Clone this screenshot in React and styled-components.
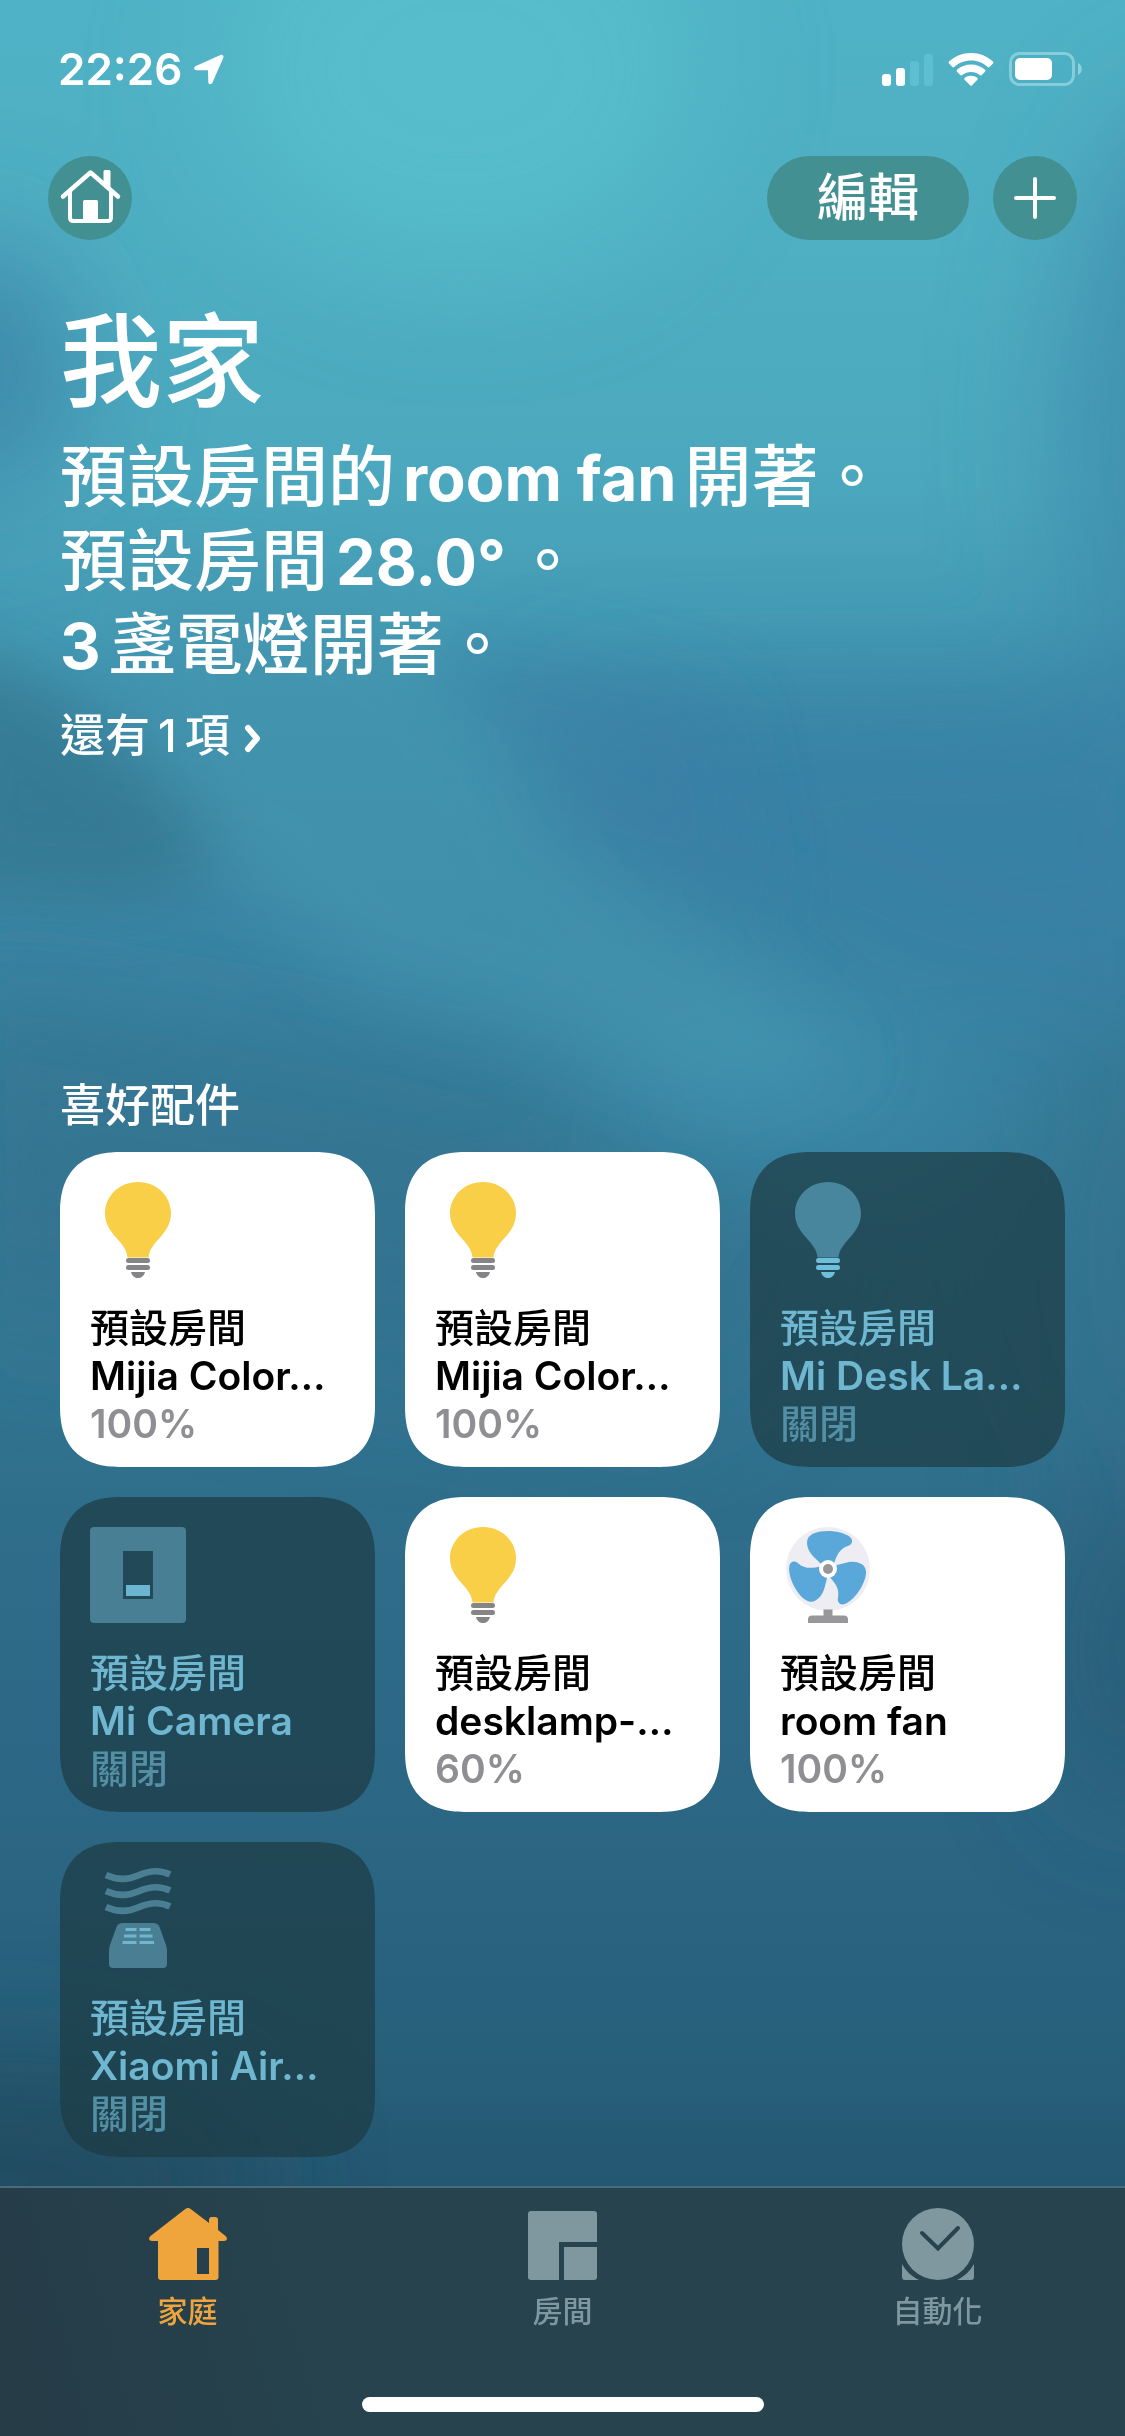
import React from "react";
import styled, { createGlobalStyle } from "styled-components";

const GlobalStyle = createGlobalStyle`
  *, *::before, *::after { box-sizing: border-box; }
  html { background: #27607c; }
  body {
    margin: 0;
    font-family: Inter, "Noto Sans CJK TC", sans-serif;
    color: #fff;
  }
  button {
    margin: 0;
    padding: 0;
    border: 0;
    background: none;
    font: inherit;
    color: inherit;
    text-align: left;
    cursor: pointer;
  }
  svg { display: block; flex: none; overflow: visible; }
`;

/* ---------- layout ---------- */

const Page = styled.div`
  position: relative;
  isolation: isolate;
  display: flex;
  flex-direction: column;
  min-height: 100vh;
  overflow: hidden;
`;

const WallpaperArt = styled.svg`
  position: absolute;
  inset: 0;
  z-index: -1;
  width: 100%;
  height: 100%;
`;

const StatusBar = styled.div`
  display: flex;
  align-items: center;
  justify-content: space-between;
  height: 138px;
  padding: 0 43px 0 58px;
`;

const StatusGroup = styled.div`
  display: flex;
  align-items: center;
  gap: ${(p) => p.$gap}px;
`;

const Clock = styled.time`
  font-size: 44px;
  line-height: 54px;
  font-weight: 600;
`;

const NavBar = styled.header`
  display: flex;
  justify-content: space-between;
  padding: 18px 48px 0;
`;

const NavActions = styled.div`
  display: flex;
  gap: 24px;
`;

const PillButton = styled.button`
  display: flex;
  align-items: center;
  justify-content: center;
  min-width: 84px;
  height: 84px;
  padding: 0 ${(p) => (p.$text ? 50 : 0)}px;
  border-radius: 42px;
  background: #429091;
  font-size: 51px;
  line-height: 60px;
  font-weight: 500;
`;

const Main = styled.main`
  display: flex;
  flex: 1;
  flex-direction: column;
  padding: 62px 60px 29px;
`;

const Title = styled.h1`
  margin: 0;
  font-size: 102px;
  line-height: 120px;
  font-weight: 500;
`;

const Summary = styled.div`
  margin-top: 13px;
  font-size: 67px;
  line-height: 84px;
  font-weight: 500;
`;

const SummaryLine = styled.p`
  margin: 0;
`;

const Latin = styled.span`
  margin: 0 8px 0 ${(p) => (p.$lead ? 0 : 8)}px;
  font-size: 63px;
  line-height: 1;
  font-weight: 700;
`;

const MoreButton = styled.button`
  display: flex;
  align-items: center;
  align-self: flex-start;
  gap: 14px;
  margin-top: 22px;
  font-size: 45px;
  line-height: 54px;
  font-weight: 500;
`;

const Count = styled.span`
  margin: 0 8px;
`;

const Favorites = styled.section`
  margin-top: 316px;
`;

const SectionTitle = styled.h2`
  margin: 0 0 19px;
  font-size: 45px;
  line-height: 54px;
  font-weight: 500;
`;

const CardGrid = styled.ul`
  display: grid;
  grid-template-columns: repeat(3, minmax(0, 1fr));
  gap: 30px;
  margin: 0;
  padding: 0;
  list-style: none;
`;

const Card = styled.button`
  display: flex;
  flex-direction: column;
  width: 100%;
  padding: 30px 30px 19px;
  border-radius: 50px;
  background: ${(p) => (p.$on ? "#fff" : "rgba(29, 59, 68, 0.72)")};
  color: ${(p) => (p.$on ? "#000" : "#6fb6d0")};

  @supports (corner-shape: superellipse(1.3)) {
    border-radius: 62px;
    corner-shape: superellipse(1.3);
  }
`;

const CardText = styled.span`
  display: flex;
  flex-direction: column;
  margin-top: 26px;
  font-size: 39px;
  line-height: 48px;
  font-weight: 500;
  white-space: nowrap;
`;

const DeviceName = styled.span`
  font-weight: 600;
`;

const DeviceState = styled.span`
  font-weight: ${(p) => (p.$on ? 600 : 500)};
  color: ${(p) => (p.$on ? "#8e8e93" : "#5390a5")};
`;

const TabBar = styled.footer`
  display: flex;
  flex-direction: column;
  align-items: center;
  justify-content: space-between;
  height: 250px;
  padding-bottom: 24px;
  border-top: 2px solid #476b7c;
  background: linear-gradient(75deg, #263c47 0%, #26434e 30%, #26434e 100%);
`;

const Tabs = styled.nav`
  display: grid;
  grid-template-columns: repeat(3, 1fr);
  width: 100%;
`;

const Tab = styled.a`
  display: flex;
  flex-direction: column;
  align-items: center;
  padding-top: 20px;
  font-size: 30px;
  line-height: 36px;
  font-weight: 500;
  color: ${(p) => (p.$active ? "#f0a53c" : "#7f979f")};
  text-decoration: none;
`;

const TabIcon = styled.span`
  display: flex;
  align-items: flex-end;
  height: 72px;
  margin-bottom: 13px;
`;

const HomeIndicator = styled.div`
  width: 402px;
  height: 15px;
  border-radius: 8px;
  background: #fff;
`;

/* ---------- drawings ---------- */

function Wallpaper() {
  return (
    <WallpaperArt viewBox="0 0 1125 2436" preserveAspectRatio="none" aria-hidden="true">
      <defs>
        <linearGradient id="water" x1="0" y1="0" x2="0" y2="1">
          <stop offset="0" stopColor="#50b2c6" />
          <stop offset="0.1" stopColor="#4fafc3" />
          <stop offset="0.2" stopColor="#4ba7bd" />
          <stop offset="0.25" stopColor="#459cb5" />
          <stop offset="0.29" stopColor="#3f90ad" />
          <stop offset="0.35" stopColor="#3c88a7" />
          <stop offset="0.45" stopColor="#3781a0" />
          <stop offset="0.55" stopColor="#337895" />
          <stop offset="0.62" stopColor="#2f6e8b" />
          <stop offset="0.75" stopColor="#2b6683" />
          <stop offset="0.85" stopColor="#275f7a" />
          <stop offset="0.9" stopColor="#245670" />
        </linearGradient>
        <filter id="soft" x="-100%" y="-100%" width="300%" height="300%">
          <feGaussianBlur stdDeviation="60" />
        </filter>
        <filter id="fine" x="-50%" y="-50%" width="200%" height="200%">
          <feGaussianBlur stdDeviation="34" />
        </filter>
      </defs>
      <rect width="1125" height="2436" fill="url(#water)" />
      <g filter="url(#soft)">
        <ellipse cx="460" cy="70" rx="240" ry="200" fill="#59c1ce" opacity="0.7" />
        <ellipse cx="-30" cy="370" rx="110" ry="130" fill="#3a7fa3" opacity="0.75" />
        <ellipse cx="1210" cy="430" rx="150" ry="340" fill="#3c86a8" opacity="0.7" />
        <path d="M560 700L1200 690L1200 1010L960 1000C850 920 650 900 590 840Z" fill="#377da3" opacity="0.75" />
        <path d="M-60 980L300 1040L620 1110L840 1250L700 1420L-60 1300Z" fill="#2f6c88" opacity="0.5" />
        <ellipse cx="1140" cy="1250" rx="120" ry="240" fill="#2f6c86" opacity="0.5" />
        <ellipse cx="760" cy="1080" rx="190" ry="80" fill="#4090ae" opacity="0.7" />
        <ellipse cx="0" cy="2180" rx="260" ry="120" fill="#214b5e" opacity="0.8" />
        <ellipse cx="1140" cy="1650" rx="90" ry="160" fill="#265a74" opacity="0.7" />
      </g>
      <g filter="url(#fine)">
        <path d="M170 560L400 620L490 740L560 850L740 960L860 1060L740 1110L560 1040L360 980L240 880L120 700Z" fill="#4596af" opacity="0.6" />
        <path d="M430 650C520 640 640 680 720 700L760 900C700 900 620 880 570 830C510 770 500 730 430 650Z" fill="#387fa5" opacity="0.55" />
        <path d="M-60 640L40 690L150 770L225 850L150 900L-60 890Z" fill="#33758f" opacity="0.8" />
      </g>
    </WallpaperArt>
  );
}

const LocationArrow = () => (
  <svg width="30" height="30" viewBox="0 0 30 30" fill="#fff" aria-hidden="true">
    <path d="M26.5 1L1.8 12C-.6 13.200-.2 16.200 2.300 16.200L14 16.300L14.300 28C14.300 30.600 17.300 31 18.400 28.800L29.300 3.800C30.100 1.800 28.500 .2 26.500 1Z" />
  </svg>
);

const Signal = () => (
  <svg width="51" height="33" viewBox="0 0 51 33" fill="#fff" aria-hidden="true">
    <rect x="0" y="21" width="9" height="12" rx="3" />
    <rect x="14" y="15" width="9" height="18" rx="3" />
    <g fill="#62c4d4" opacity="0.75">
      <rect x="28" y="8" width="9" height="25" rx="3" />
      <rect x="42" y="1" width="9" height="32" rx="3" />
    </g>
  </svg>
);

const Wifi = () => (
  <svg width="46" height="33" viewBox="0 0 46 33" fill="#fff" aria-hidden="true">
    <path d="M23 0C31.500 0 39.300 3.200 45 8.600Q46 9.600 45 10.600L41.600 14Q40.700 14.800 39.700 13.900C35.200 9.800 29.400 7.500 23 7.500S10.800 9.800 6.300 13.900Q5.300 14.800 4.400 14L1 10.600Q0 9.600 1 8.600C6.700 3.200 14.500 0 23 0Z" />
    <path d="M23 11.400C28.400 11.400 33.300 13.400 37 16.800Q38 17.700 37 18.700L33.500 22.200Q32.700 23 31.700 22.100C29.300 20.100 26.300 18.900 23 18.900S16.700 20.100 14.300 22.100Q13.300 23 12.500 22.200L9 18.700Q8 17.700 9 16.800C12.700 13.400 17.600 11.400 23 11.400Z" />
    <path d="M23 22.700C25.500 22.700 27.700 23.600 29.400 25Q30.200 25.900 29.400 26.700L24 32.300Q23 33.300 22 32.300L16.600 26.700Q15.800 25.900 16.600 25C18.300 23.600 20.500 22.700 23 22.700Z" />
  </svg>
);

const Battery = () => (
  <svg width="73" height="34" viewBox="0 0 73 34" aria-hidden="true">
    <rect x="1.500" y="1.500" width="63" height="31" rx="9" fill="none" stroke="#a5dbe6" strokeWidth="3" opacity="0.65" />
    <path d="M69 11C74 13 74 21 69 23Z" fill="#a5dbe6" opacity="0.75" />
    <rect x="6" y="6" width="37" height="22" rx="5" fill="#fff" />
  </svg>
);

const HouseOutline = () => (
  <svg width="84" height="84" viewBox="0 0 84 84" fill="none" stroke="#fff" strokeLinecap="round" strokeLinejoin="round" aria-hidden="true">
    <path d="M15 40.500L42.500 16.500L70 40.500" strokeWidth="4.500" />
    <path d="M22 36V61.500Q22 65 25.500 65H59.500Q63 65 63 61.500V36" strokeWidth="4" />
    <path d="M55.500 26V15.500Q55.500 14 57 14H61Q62.500 14 62.500 15.500V33Z" fill="#fff" stroke="none" />
    <path d="M35 66V45.500Q35 44 36.500 44H48.500Q50 44 50 45.500V66Z" fill="#fff" stroke="none" />
  </svg>
);

const Plus = () => (
  <svg width="42" height="42" viewBox="0 0 42 42" fill="none" stroke="#fff" strokeWidth="4" strokeLinecap="round" aria-hidden="true">
    <path d="M21 2V40M2 21H40" />
  </svg>
);

const Chevron = () => (
  <svg width="17" height="32" viewBox="0 0 17 32" fill="none" stroke="#fff" strokeWidth="6" strokeLinecap="round" strokeLinejoin="round" aria-hidden="true">
    <path d="M4 8L13 18.500L4 29" />
  </svg>
);

const Bulb = ({ on }) => (
  <svg width="96" height="96" viewBox="0 0 96 96" fill={on ? "#858588" : "#6fbfdc"} aria-hidden="true">
    <path
      d="M48 0C67 0 81 14.500 81 31C81 42 76 48.500 70 55.500C64 62 59 68 58.500 75.500H37.500C37 68 32 62 26 55.500C20 48.500 15 42 15 31C15 14.500 29 0 48 0Z"
      fill={on ? "#f8cf47" : "#47869c"}
    />
    <rect x="36" y="76" width="24" height="5" rx="2.500" />
    <rect x="36" y="83" width="24" height="5" rx="2.500" />
    <path d="M41 90H55C54 94 51 96 48 96S42 94 41 90Z" />
  </svg>
);

const CameraSwitch = () => (
  <svg width="96" height="96" viewBox="0 0 96 96" aria-hidden="true">
    <path fillRule="evenodd" d="M4 0H92Q96 0 96 4V92Q96 96 92 96H4Q0 96 0 92V4Q0 0 4 0ZM33 24V72H63V24Z" fill="#487f94" />
    <rect x="36" y="58" width="24" height="11" fill="#6bb5d0" />
  </svg>
);

const blade =
  "M40 36C34 30 27 25 27 15.500C27 7 37 4 48 4C56 4 65 6 70 10C73.500 13 72.500 17.500 68 19C60 21.500 56.500 28 54 37L48 42Z";

const Fan = () => (
  <svg width="96" height="96" viewBox="0 0 96 96" aria-hidden="true">
    <circle cx="48" cy="42" r="42" fill="#eeedf3" />
    <g fill="#5aa8da">
      <path d={blade} />
      <path d={blade} transform="rotate(120 48 42)" />
      <path d={blade} transform="rotate(240 48 42)" />
    </g>
    <circle cx="48" cy="42" r="9" fill="#fff" />
    <circle cx="48" cy="42" r="5" fill="#98989a" />
    <path d="M43.500 82.500H52.500V88.500H64Q68 88.500 68 92.500V96H28V92.500Q28 88.500 32 88.500H43.500Z" fill="#98989a" />
  </svg>
);

const Purifier = () => (
  <svg width="96" height="96" viewBox="0 0 96 96" fill="none" aria-hidden="true">
    <g stroke="#4a7f93" strokeWidth="6.500">
      <path d="M16 3C27 8 38 8 48 3.500S69 -3 80 2.500" />
      <path d="M16 19C27 24 38 24 48 19.500S69 13 80 18.500" />
      <path d="M16 35C27 40 38 40 48 35.500S69 29 80 34.500" />
    </g>
    <path d="M33 51H63Q68 51 69.500 55L76 73Q77 76 77 79V92Q77 96 73 96H23Q19 96 19 92V79Q19 76 20 73L26.500 55Q28 51 33 51Z" fill="#4a7f93" />
    <path d="M35.500 57.500H46.500M49.500 57.500H60.500M34 64H46.500M49.500 64H62.500M32.500 70.500H46.500M49.500 70.500H64" stroke="#6fb6d0" strokeWidth="3" />
  </svg>
);

const TabHome = () => (
  <svg width="78" height="72" viewBox="0 0 78 72" fill="currentColor" aria-hidden="true">
    <path
      fillRule="evenodd"
      d="M36 1.200Q39 -1 42 1.200L60 15V12Q60 9 63 9H66Q69 9 69 12V22L76.500 28Q78 29.500 78 31Q77.500 33 75 33H69.500V69Q69.500 72 66.500 72H12Q9 72 9 69V33H3Q.5 33 0 31Q0 29.500 1.500 28ZM48 40V66H60V40Z"
    />
  </svg>
);

const TabRooms = () => (
  <svg width="69" height="69" viewBox="0 0 69 69" fill="currentColor" aria-hidden="true">
    <path d="M3 0H66Q69 0 69 3V31H31V69H3Q0 69 0 66V3Q0 0 3 0Z" />
    <path d="M36 36H69V66Q69 69 66 69H36Z" />
  </svg>
);

const TabClock = () => (
  <svg width="72" height="72" viewBox="0 0 72 72" fill="currentColor" aria-hidden="true">
    <circle cx="36" cy="36" r="36" />
    <path d="M0 56C4 63 9 68 17 72H3Q0 72 0 69ZM72 56C68 63 63 68 55 72H69Q72 72 72 69Z" />
    <path d="M20 25L36 40.500L56 20" fill="none" stroke="#26434e" strokeWidth="4" strokeLinecap="round" />
  </svg>
);

/* ---------- content ---------- */

const ROOM = "預設房間";

const devices = [
  { id: "color-1", name: "Mijia Color…", state: "100%", on: true, icon: <Bulb on /> },
  { id: "color-2", name: "Mijia Color…", state: "100%", on: true, icon: <Bulb on /> },
  { id: "desk", name: "Mi Desk La…", state: "關閉", on: false, icon: <Bulb /> },
  { id: "camera", name: "Mi Camera", state: "關閉", on: false, icon: <CameraSwitch /> },
  { id: "desklamp", name: "desklamp-…", state: "60%", on: true, icon: <Bulb on /> },
  { id: "fan", name: "room fan", state: "100%", on: true, icon: <Fan /> },
  { id: "air", name: "Xiaomi Air…", state: "關閉", on: false, icon: <Purifier /> },
];

const tabs = [
  { id: "home", label: "家庭", icon: <TabHome />, active: true },
  { id: "rooms", label: "房間", icon: <TabRooms /> },
  { id: "automation", label: "自動化", icon: <TabClock /> },
];

export default function App() {
  return (
    <Page lang="zh-Hant">
      <GlobalStyle />
      <Wallpaper />
      <StatusBar>
        <StatusGroup $gap={12}>
          <Clock>22:26</Clock>
          <LocationArrow />
        </StatusGroup>
        <StatusGroup $gap={15}>
          <Signal />
          <Wifi />
          <Battery />
        </StatusGroup>
      </StatusBar>
      <NavBar>
        <PillButton type="button" aria-label="家庭">
          <HouseOutline />
        </PillButton>
        <NavActions>
          <PillButton type="button" $text>編輯</PillButton>
          <PillButton type="button" aria-label="加入">
            <Plus />
          </PillButton>
        </NavActions>
      </NavBar>
      <Main>
        <Title>我家</Title>
        <Summary>
          <SummaryLine>預設房間的<Latin>room fan</Latin>開著。</SummaryLine>
          <SummaryLine>預設房間<Latin>28.0°</Latin>。</SummaryLine>
          <SummaryLine><Latin $lead>3</Latin>盞電燈開著。</SummaryLine>
        </Summary>
        <MoreButton type="button">
          <span>還有<Count>1</Count>項</span>
          <Chevron />
        </MoreButton>
        <Favorites>
          <SectionTitle>喜好配件</SectionTitle>
          <CardGrid>
            {devices.map((d) => (
              <li key={d.id}>
                <Card type="button" $on={d.on} aria-pressed={d.on}>
                  {d.icon}
                  <CardText>
                    <span>{ROOM}</span>
                    <DeviceName>{d.name}</DeviceName>
                    <DeviceState $on={d.on}>{d.state}</DeviceState>
                  </CardText>
                </Card>
              </li>
            ))}
          </CardGrid>
        </Favorites>
      </Main>
      <TabBar>
        <Tabs>
          {tabs.map((t) => (
            <Tab key={t.id} href={`#${t.id}`} $active={t.active} aria-current={t.active ? "page" : undefined}>
              <TabIcon>{t.icon}</TabIcon>
              {t.label}
            </Tab>
          ))}
        </Tabs>
        <HomeIndicator />
      </TabBar>
    </Page>
  );
}
